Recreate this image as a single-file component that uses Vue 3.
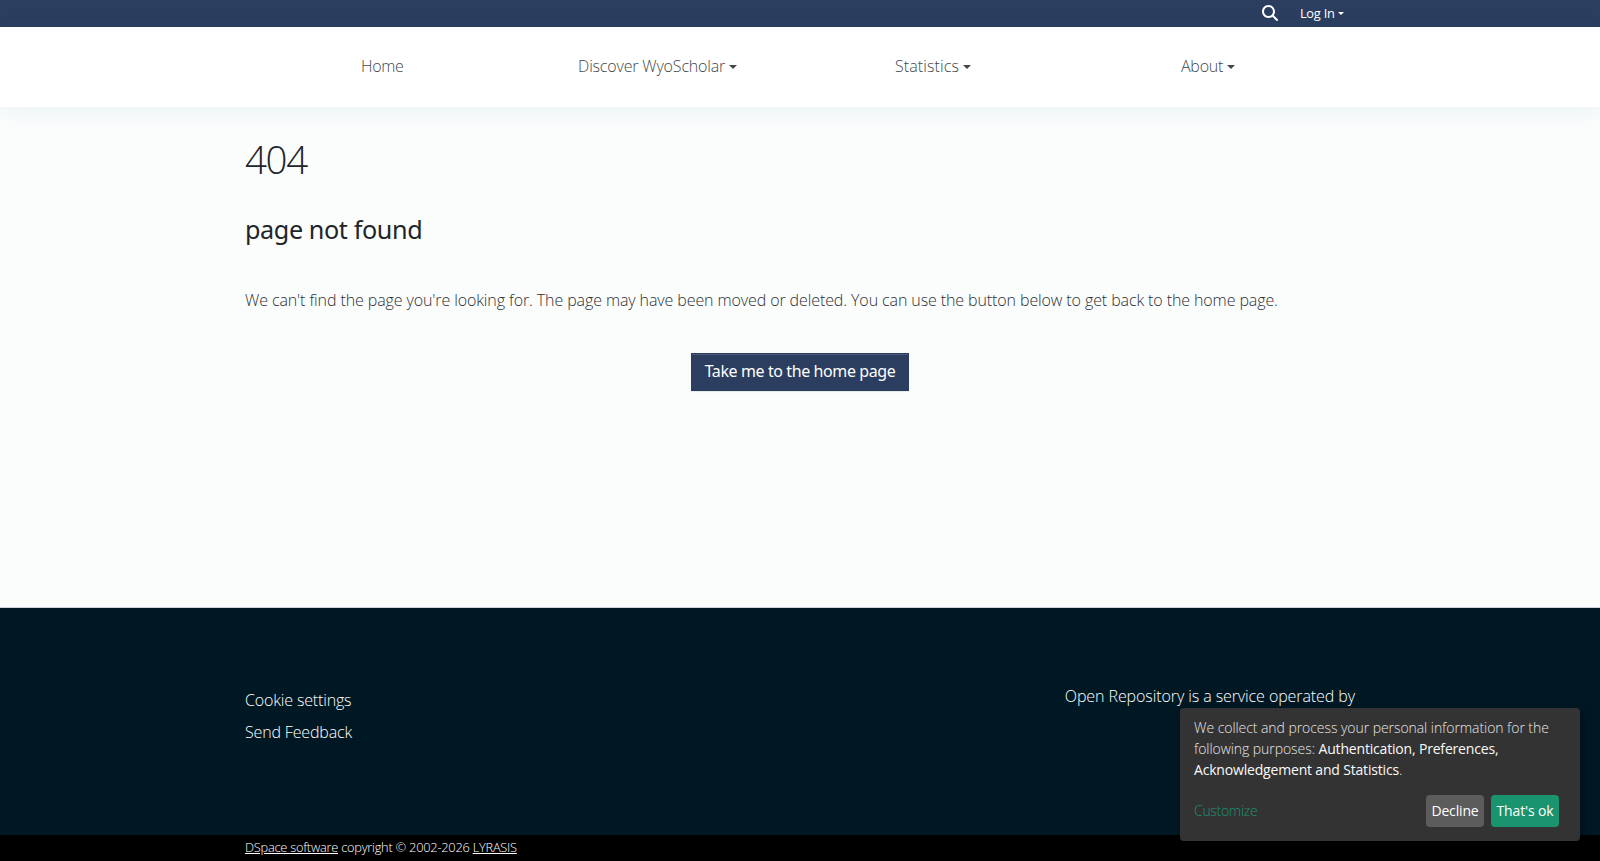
<template>
  <div class="page">
    <div class="top-bar">
      <div class="container">
        <button class="search" aria-label="Search">
          <svg viewBox="0 0 512 512" width="16" height="16">
            <path fill="currentColor" d="M416 208c0 45.900-14.900 88.300-40 122.700L502.600 457.400c12.500 12.500 12.500 32.800 0 45.300s-32.800 12.500-45.300 0L330.700 376c-34.400 25.200-76.800 40-122.700 40C93.100 416 0 322.900 0 208S93.100 0 208 0S416 93.100 416 208zM208 352a144 144 0 1 0 0-288 144 144 0 1 0 0 288z" />
          </svg>
        </button>
        <a class="login caret">Log In</a>
      </div>
    </div>

    <nav class="navbar">
      <ul class="container">
        <li v-for="item in navItems" :key="item.label" :class="item.name">
          <a :class="{ caret: item.menu }">{{ item.label }}</a>
        </li>
      </ul>
    </nav>

    <main class="container">
      <h1>404</h1>
      <h2>page not found</h2>
      <p>We can't find the page you're looking for. The page may have been moved or deleted. You can use the button below to get back to the home page.</p>
      <div class="actions">
        <a class="btn-home">Take me to the home page</a>
      </div>
    </main>

    <footer>
      <div class="footer-top">
        <div class="container">
          <ul class="links">
            <li><a>Cookie settings</a></li>
            <li><a>Send Feedback</a></li>
          </ul>
          <p class="operated">Open Repository is a service operated by</p>
        </div>
      </div>
      <div class="footer-bottom">
        <div class="container">
          <a>DSpace software</a> copyright © 2002-2026 <a>LYRASIS</a>
        </div>
      </div>
    </footer>

    <div v-if="showNotice" class="cookie-notice">
      <p>
        We collect and process your personal information for the<br />
        following purposes: <strong>Authentication, Preferences,<br />Acknowledgement and Statistics</strong>.
      </p>
      <div class="notice-actions">
        <a class="customize">Customize</a>
        <button class="decline" @click="showNotice = false">Decline</button>
        <button class="accept" @click="showNotice = false">That's ok</button>
      </div>
    </div>
  </div>
</template>

<script setup>
import { ref } from 'vue'

const navItems = [
  { name: 'home', label: 'Home', menu: false },
  { name: 'discover', label: 'Discover WyoScholar', menu: true },
  { name: 'statistics', label: 'Statistics', menu: true },
  { name: 'about', label: 'About', menu: true }
]
const showNotice = ref(true)
</script>

<style>
body {
  margin: 0;
}
</style>

<style scoped>
* {
  box-sizing: border-box;
}
.page {
  display: flex;
  flex-direction: column;
  height: 861px;
  overflow: hidden;
  background: #fbfdfd;
  color: #212529;
  font-family: 'Open Sans', 'Noto Sans', sans-serif;
  font-size: 16px;
  font-weight: 300;
  line-height: 24px;
  letter-spacing: -0.09px;
}
.container {
  width: 1140px;
  margin: 0 auto;
  padding: 0 15px;
}
ul {
  list-style: none;
}
a {
  cursor: pointer;
  white-space: nowrap;
}
button {
  border: 0;
  font-family: inherit;
  letter-spacing: inherit;
}
.caret::after {
  content: '';
  display: inline-block;
  margin-left: 0.255em;
  vertical-align: 0.14em;
  border-top: 0.3em solid;
  border-right: 0.3em solid transparent;
  border-left: 0.3em solid transparent;
}
.top-bar {
  height: 27px;
  background: #2b3e5f;
  color: #fff;
}
.top-bar .container {
  display: flex;
  align-items: center;
  justify-content: flex-end;
  height: 26px;
  padding-right: 26px;
}
.search {
  display: flex;
  margin-right: 22px;
  padding: 0;
  background: none;
  color: #fff;
}
.login {
  font-size: 12.8px;
  font-weight: 500;
  letter-spacing: -0.2px;
}
.login::after {
  vertical-align: 0.22em;
}
.navbar {
  position: relative;
  height: 80px;
  background: #fff;
  box-shadow: 0 5px 20px rgba(43, 98, 143, 0.08);
}
.navbar ul {
  display: flex;
  align-items: center;
  height: 77px;
}
.navbar a {
  color: #43474a;
}
.home {
  margin-left: 116px;
  width: 217px;
  letter-spacing: -0.3px;
}
.discover {
  width: 317px;
  letter-spacing: -0.17px;
}
.statistics {
  width: 286px;
  letter-spacing: 0.1px;
}
.about {
  letter-spacing: -0.25px;
}
main {
  flex: 1;
}
h1 {
  margin: 28px 0 0;
  font-size: 38.5px;
  font-weight: 300;
  line-height: 48px;
  letter-spacing: -1.4px;
}
h2 {
  margin: 30px 0 0;
  font-family: 'Noto Sans', sans-serif;
  font-size: 25.2px;
  font-weight: 400;
  line-height: 32px;
  letter-spacing: -0.4px;
}
main p {
  margin: 43px 0 0;
  color: #2c3034;
  letter-spacing: -0.105px;
  white-space: nowrap;
}
.actions {
  display: flex;
  justify-content: center;
  margin-top: 41px;
}
.btn-home {
  width: 218px;
  height: 38px;
  border: 1px solid #2b3e5f;
  background: #2b3e5f;
  box-shadow: inset 0 1px 0 rgba(255, 255, 255, 0.15), 0 1px 1px rgba(0, 0, 0, 0.075);
  color: #fff;
  font-family: 'Noto Sans', sans-serif;
  font-weight: 400;
  line-height: 35px;
  letter-spacing: -0.4px;
  text-align: center;
}
footer {
  border-top: 1px solid #ced4da;
  color: #fff;
}
.footer-top {
  height: 227px;
  background: #001824;
}
.footer-top .container {
  display: flex;
  justify-content: space-between;
}
.links {
  display: flex;
  flex-direction: column;
  gap: 8px;
  margin: 80px 0 0;
  padding: 0;
  letter-spacing: -0.16px;
}
.operated {
  margin: 76px 0 0;
}
.footer-bottom {
  height: 26px;
  background: #000;
  color: #fff;
  font-size: 12.8px;
  line-height: 25px;
  letter-spacing: -0.23px;
}
.footer-bottom a {
  text-decoration: underline;
}
.cookie-notice {
  position: absolute;
  right: 20px;
  bottom: 20px;
  width: 400px;
  height: 133px;
  padding: 9px 21px 14px 14px;
  border-radius: 4px;
  background: #333;
  box-shadow: 0 4px 6px rgba(0, 0, 0, 0.2), 5px 5px 10px rgba(0, 0, 0, 0.19);
  color: #e6e6e6;
  font-size: 14px;
  line-height: 21px;
  letter-spacing: -0.06px;
}
.cookie-notice p {
  margin: 0;
  white-space: nowrap;
}
.cookie-notice strong {
  color: #fafafa;
  font-weight: 500;
  letter-spacing: -0.18px;
}
.notice-actions {
  display: flex;
  align-items: center;
  margin-top: 15px;
}
.customize {
  margin-right: auto;
  padding-bottom: 2px;
  color: #1a936f;
  letter-spacing: -0.3px;
}
.notice-actions button {
  height: 32px;
  padding: 0 0 2px;
  border-radius: 4px;
  color: #fff;
  font-size: 14px;
  font-weight: 500;
  letter-spacing: -0.15px;
}
.decline {
  width: 58px;
  margin-right: 7px;
  background: #5c5c5c;
}
.accept {
  width: 68px;
  background: #1a936f;
}
</style>
